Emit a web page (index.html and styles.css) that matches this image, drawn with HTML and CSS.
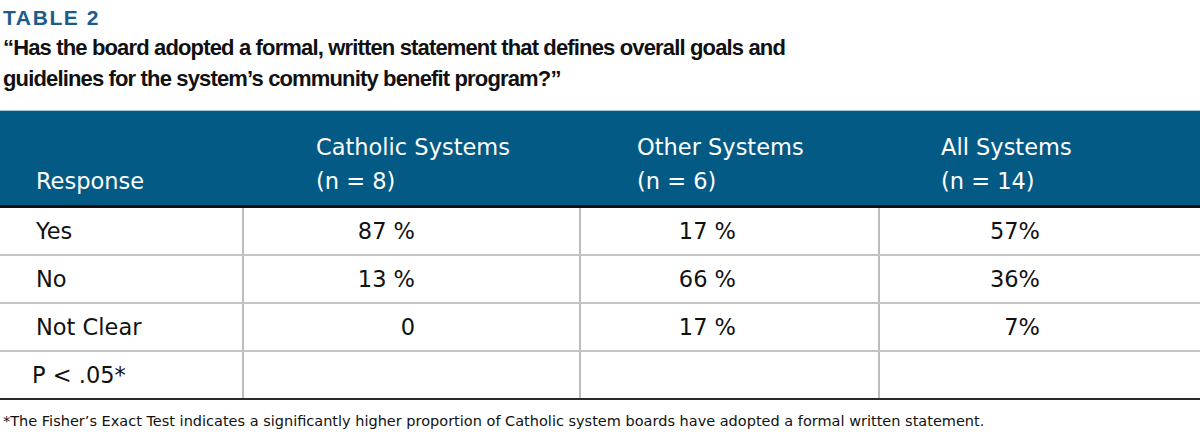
FILE: index.html
```html
<!DOCTYPE html>
<html lang="en">
<head>
<meta charset="utf-8">
<title>Table 2</title>
<link rel="stylesheet" href="styles.css">
</head>
<body>
<div class="figure">
  <div class="label">TABLE 2</div>
  <h1 class="title">“Has the board adopted a formal, written statement that defines overall goals and<br>guidelines for the system’s community benefit program?”</h1>
  <table class="data">
    <colgroup>
      <col class="w1"><col class="w2"><col class="w3"><col class="w4">
    </colgroup>
    <thead>
      <tr>
        <th class="h1">Response</th>
        <th class="h2">Catholic Systems<br>(n = 8)</th>
        <th class="h3">Other Systems<br>(n = 6)</th>
        <th class="h4">All Systems<br>(n = 14)</th>
      </tr>
    </thead>
    <tbody>
      <tr><td class="lab">Yes</td><td class="v2">87 %</td><td class="v3">17 %</td><td class="v4">57%</td></tr>
      <tr><td class="lab">No</td><td class="v2">13 %</td><td class="v3">66 %</td><td class="v4">36%</td></tr>
      <tr><td class="lab">Not Clear</td><td class="v2">0</td><td class="v3">17 %</td><td class="v4">7%</td></tr>
      <tr class="last"><td class="lab p">P &lt; .05*</td><td class="v2"></td><td class="v3"></td><td class="v4"></td></tr>
    </tbody>
  </table>
  <p class="note">*The Fisher’s Exact Test indicates a significantly higher proportion of Catholic system boards have adopted a formal written statement.</p>
</div>
</body>
</html>
```
FILE: styles.css
```css
html, body {
  margin: 0;
  padding: 0;
  background: #ffffff;
}
.figure {
  width: 1200px;
  font-family: "DejaVu Sans", Roboto, sans-serif;
  color: #111111;
}
.label {
  padding: 6px 0 0 3px;
  font-family: "Liberation Sans", Roboto, sans-serif;
  font-weight: 700;
  font-size: 21px;
  line-height: 24px;
  letter-spacing: 1.6px;
  color: #1b5d89;
}
.title {
  margin: 2px 0 0 3px;
  font-family: "Liberation Sans", sans-serif;
  font-weight: 700;
  font-size: 22px;
  line-height: 31px;
  letter-spacing: -0.85px;
  color: #111111;
  height: 78px;
}
.data {
  width: 1200px;
  border-collapse: collapse;
  table-layout: fixed;
}
.w1 { width: 243px; }
.w2 { width: 337px; }
.w3 { width: 299px; }
.w4 { width: 321px; }
thead th {
  background: #035a85;
  color: #ffffff;
  font-weight: 400;
  font-size: 22.5px;
  line-height: 34px;
  text-align: left;
  vertical-align: bottom;
  height: 87px;
  padding: 0 0 7px 0;
  border-top: 1px solid #a9c4d6;
  border-bottom: 3px solid #111111;
}
th.h1 { padding-left: 36px; }
th.h2 { padding-left: 73px; }
th.h3 { padding-left: 57px; }
th.h4 { padding-left: 62px; }
tbody td {
  height: 46px;
  padding: 0;
  font-size: 22.5px;
  border-bottom: 2px solid #c4c4c4;
  border-left: 2px solid #bdbdbd;
  vertical-align: middle;
}
tbody td.lab {
  border-left: none;
  padding-left: 36px;
}
tbody td.p { padding-left: 32px; }
td.v2 { text-align: right; padding-right: 164px; }
td.v3 { text-align: right; padding-right: 142px; }
td.v4 { text-align: right; padding-right: 160px; }
tbody tr.last td { border-bottom: 2px solid #2a2a2a; }
.note {
  margin: 12px 0 0 3px;
  font-size: 14.5px;
  line-height: 18px;
  color: #111111;
}
```
